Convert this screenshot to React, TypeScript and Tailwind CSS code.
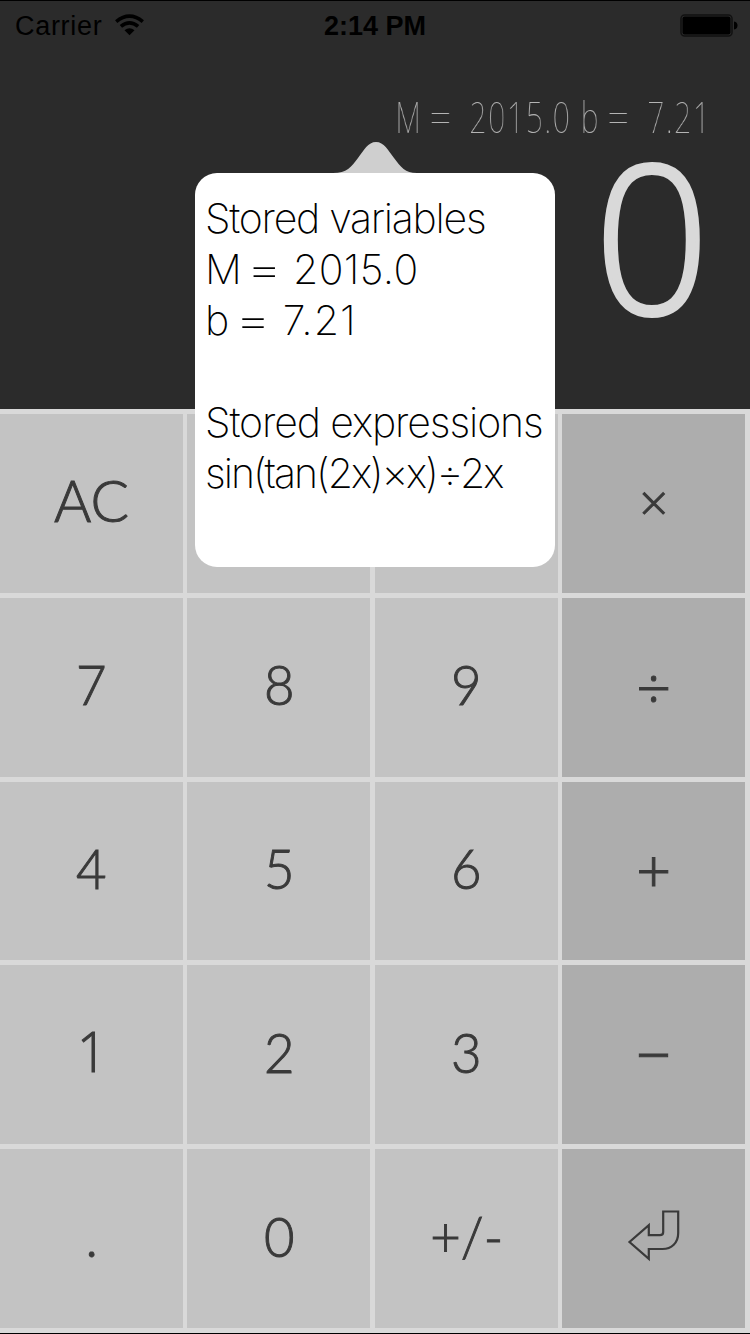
import React from 'react';

type Key = { label: React.ReactNode; op?: boolean; style?: string };

const digit = "font-['Lato'] text-[56px]";
const operator = "font-['Open_Sans'] [-webkit-text-stroke:1px_#3a3a3a]";

function ReturnIcon() {
  return (
    <svg className="-mt-[5px] h-[54px] w-[54px]" viewBox="626.5 1208 54 54" fill="none" stroke="#3a3a3a" strokeWidth="2.2">
      <path d="M662.7 1211.5H677.7V1233C677.7 1243 671 1249 662 1249H648.3V1258.8L629 1242L648.3 1225.2V1235.2H659.5Q662.7 1235.2 662.7 1232Z" />
    </svg>
  );
}

const keys: Key[] = [
  { label: 'AC', style: "font-['Lato'] text-[57px] pb-[6px]" },
  { label: '' },
  { label: '' },
  { label: '×', op: true, style: 'text-[50px] pb-[2px]' },
  { label: '7' },
  { label: '8' },
  { label: '9' },
  { label: '÷', op: true },
  { label: '4' },
  { label: '5' },
  { label: '6' },
  { label: '+', op: true },
  { label: '1', style: "font-['Open_Sans'] text-[56px] pb-[9px]" },
  { label: '2' },
  { label: '3' },
  { label: '−', op: true },
  { label: '.' },
  { label: '0' },
  { label: '+/-' },
  { label: <ReturnIcon />, op: true },
];

function StatusBar() {
  return (
    <div className="grid h-[51px] grid-cols-3 items-center px-[15px] font-['Liberation_Sans'] text-[27px] text-black">
      <div className="flex items-center gap-[13px]">
        <span className="tracking-[0.7px]">Carrier</span>
        <svg className="-mt-[3px] h-[22px] w-[29px]" viewBox="0 0 29 22" fill="none" stroke="#000" strokeWidth="3.6">
          <path d="M1.2 7.6Q14.5 -3.4 27.8 7.6" />
          <path d="M5.9 12.4Q14.5 5.2 23.1 12.4" />
          <path d="M9.5 16.2Q14.5 12.2 19.5 16.2L14.5 21.2Z" fill="#000" stroke="none" />
        </svg>
      </div>
      <span className="text-center font-bold">2:14 PM</span>
      <svg className="-mr-[3px] -mt-[2px] h-[23px] w-[58px] justify-self-end" viewBox="0 0 58 23">
        <rect x="1" y="1" width="51" height="21" rx="3.5" fill="none" stroke="#111" strokeWidth="1.5" />
        <rect x="2.5" y="2.5" width="48" height="18" rx="2" fill="#000" />
        <path d="M54 7.5Q57.5 8 57.5 11.5T54 15.5Z" fill="#000" />
      </svg>
    </div>
  );
}

export default function App() {
  return (
    <div className="relative flex h-[1334px] w-[750px] flex-col overflow-hidden border-y border-black bg-[#2b2b2b]">
      <StatusBar />
      <div className="flex h-[357px] flex-col items-end pr-[38px]">
        <div className="mt-[35px] origin-right scale-x-[0.7] whitespace-pre font-['Noto_Sans'] text-[43px] font-[100] leading-[60px] tracking-[2.3px] text-[#b4b4b4] will-change-transform">
          M <span className="inline-block scale-x-[1.25]">=</span>{'  2015.0 b '}
          <span className="inline-block scale-x-[1.25]">=</span>{'  7.21'}
        </div>
        <div className="-mt-[16px] mr-[2px] origin-right scale-x-[0.98] font-['Open_Sans'] text-[206px] font-light leading-[206px] text-[#d9d9d9] [-webkit-text-stroke:4px_#d9d9d9]">
          0
        </div>
      </div>
      <div className="grid flex-1 grid-cols-[183px_183px_183px_183px] grid-rows-5 gap-x-[4.4px] gap-y-[5px] bg-[#d9d9d9] py-[5px]">
        {keys.map((k, i) => (
          <div
            key={i}
            className={`flex items-center justify-center font-light leading-none text-[#3a3a3a] ${
              k.op
                ? `bg-[#adadad] ${operator} ${k.style ?? 'text-[61px] pb-[2px]'}`
                : `bg-[#c3c3c3] [-webkit-text-stroke:1px_#3a3a3a] ${k.style ?? `${digit} pb-[6px]`}`
            }`}
          >
            {i > 3 ? <span className={k.op ? '' : 'scale-x-[0.94]'}>{k.label}</span> : k.label}
          </div>
        ))}
      </div>

      <div className="absolute left-[195px] top-[141px] w-[360px]">
        <svg className="mx-auto block h-[31px] w-[84px]" viewBox="0 0 84 31">
          <path d="M0 31C14 31 18 25 25 16C31 8 35 0 43 0C51 0 55 8 61 16C68 25 72 31 84 31Z" fill="#cfcfcf" />
        </svg>
        <div className="h-[394px] whitespace-pre rounded-[22px] bg-white pl-[10px] pt-[20px] font-['Inter'] text-[41px] font-[170] leading-[51px] text-black">
          <div className="tracking-[-1.25px]">Stored variables</div>
          <div className="tracking-[0.4px]">
            M <span className="inline-block -translate-x-[3px] scale-x-[1.4]">=</span> 2015.0
          </div>
          <div className="tracking-[1px]">
            b <span className="inline-block -translate-x-[3px] scale-x-[1.4]">=</span> 7.21
          </div>
          <div> </div>
          <div className="tracking-[-1.1px]">Stored expressions</div>
          <div className="tracking-[-2px]">sin(tan(2x)×x)÷2x</div>
        </div>
      </div>
    </div>
  );
}
